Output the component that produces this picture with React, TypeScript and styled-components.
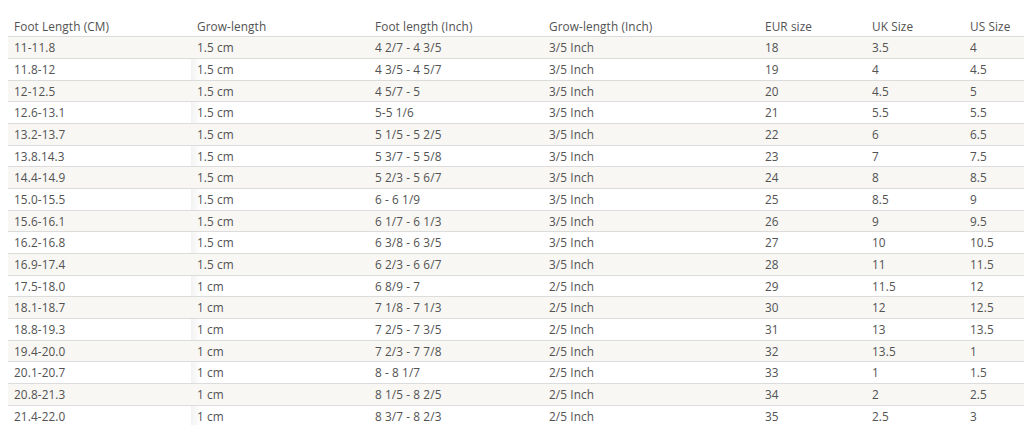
import React from "react";
import styled, { createGlobalStyle } from "styled-components";

const Global = createGlobalStyle`
  html, body { margin: 0; padding: 0; background: #ffffff; overflow: hidden; }
  body { font-family: "Open Sans", "Liberation Sans", sans-serif; }
`;

const Wrap = styled.div`
  padding: 15.5px 0 0 8px;
  width: 1016px;
  overflow: hidden;
`;

const Table = styled.table`
  border-collapse: separate;
  border-spacing: 0;
  table-layout: fixed;
  width: 1080px;
  color: #525252;
  font-size: 11.8px;
  letter-spacing: 0.1px;
`;

const Row = styled.tr<{ $striped?: boolean }>`
  background: ${(p) => (p.$striped ? "#f8f7f4" : "#ffffff")};
`;

const Cell = styled.td<{ $shade?: boolean }>`
  padding: 3px 6px;
  height: 14.67px;
  line-height: 14.67px;
  border-bottom: 1px solid #dcdcdc;
  white-space: nowrap;
  text-align: left;
  font-weight: 400;
  background: ${(p) =>
    p.$shade
      ? "linear-gradient(to right, rgba(0,0,0,0.05), rgba(0,0,0,0) 10px)"
      : "transparent"};
`;

const HeadCell = styled(Cell).attrs({ as: "th" })``;

const widths = [183, 178, 174, 216, 107, 98, 124];

const headers = [
  "Foot Length (CM)",
  "Grow-length",
  "Foot length (Inch)",
  "Grow-length (Inch)",
  "EUR size",
  "UK Size",
  "US Size",
];

const rows: string[][] = [
  ["11-11.8", "1.5 cm", "4 2/7 - 4 3/5", "3/5 Inch", "18", "3.5", "4"],
  ["11.8-12", "1.5 cm", "4 3/5 - 4 5/7", "3/5 Inch", "19", "4", "4.5"],
  ["12-12.5", "1.5 cm", "4 5/7 - 5", "3/5 Inch", "20", "4.5", "5"],
  ["12.6-13.1", "1.5 cm", "5-5 1/6", "3/5 Inch", "21", "5.5", "5.5"],
  ["13.2-13.7", "1.5 cm", "5 1/5 - 5 2/5", "3/5 Inch", "22", "6", "6.5"],
  ["13.8.14.3", "1.5 cm", "5 3/7 - 5 5/8", "3/5 Inch", "23", "7", "7.5"],
  ["14.4-14.9", "1.5 cm", "5 2/3 - 5 6/7", "3/5 Inch", "24", "8", "8.5"],
  ["15.0-15.5", "1.5 cm", "6 - 6 1/9", "3/5 Inch", "25", "8.5", "9"],
  ["15.6-16.1", "1.5 cm", "6 1/7 - 6 1/3", "3/5 Inch", "26", "9", "9.5"],
  ["16.2-16.8", "1.5 cm", "6 3/8 - 6 3/5", "3/5 Inch", "27", "10", "10.5"],
  ["16.9-17.4", "1.5 cm", "6 2/3 - 6 6/7", "3/5 Inch", "28", "11", "11.5"],
  ["17.5-18.0", "1 cm", "6 8/9 - 7", "2/5 Inch", "29", "11.5", "12"],
  ["18.1-18.7", "1 cm", "7 1/8 - 7 1/3", "2/5 Inch", "30", "12", "12.5"],
  ["18.8-19.3", "1 cm", "7 2/5 - 7 3/5", "2/5 Inch", "31", "13", "13.5"],
  ["19.4-20.0", "1 cm", "7 2/3 - 7 7/8", "2/5 Inch", "32", "13.5", "1"],
  ["20.1-20.7", "1 cm", "8 - 8 1/7", "2/5 Inch", "33", "1", "1.5"],
  ["20.8-21.3", "1 cm", "8 1/5 - 8 2/5", "2/5 Inch", "34", "2", "2.5"],
  ["21.4-22.0", "1 cm", "8 3/7 - 8 2/3", "2/5 Inch", "35", "2.5", "3"],
];

export default function App() {
  return (
    <>
      <Global />
      <Wrap>
        <Table>
          <colgroup>
            {widths.map((w, i) => (
              <col key={i} style={{ width: w }} />
            ))}
          </colgroup>
          <thead>
            <Row>
              {headers.map((h) => (
                <HeadCell key={h}>{h}</HeadCell>
              ))}
            </Row>
          </thead>
          <tbody>
            {rows.map((r, ri) => {
              const striped = ri % 2 === 0;
              return (
                <Row key={ri} $striped={striped}>
                  {r.map((c, ci) => (
                    <Cell key={ci} $shade={!striped && ci === 1}>
                      {c}
                    </Cell>
                  ))}
                </Row>
              );
            })}
          </tbody>
        </Table>
      </Wrap>
    </>
  );
}
